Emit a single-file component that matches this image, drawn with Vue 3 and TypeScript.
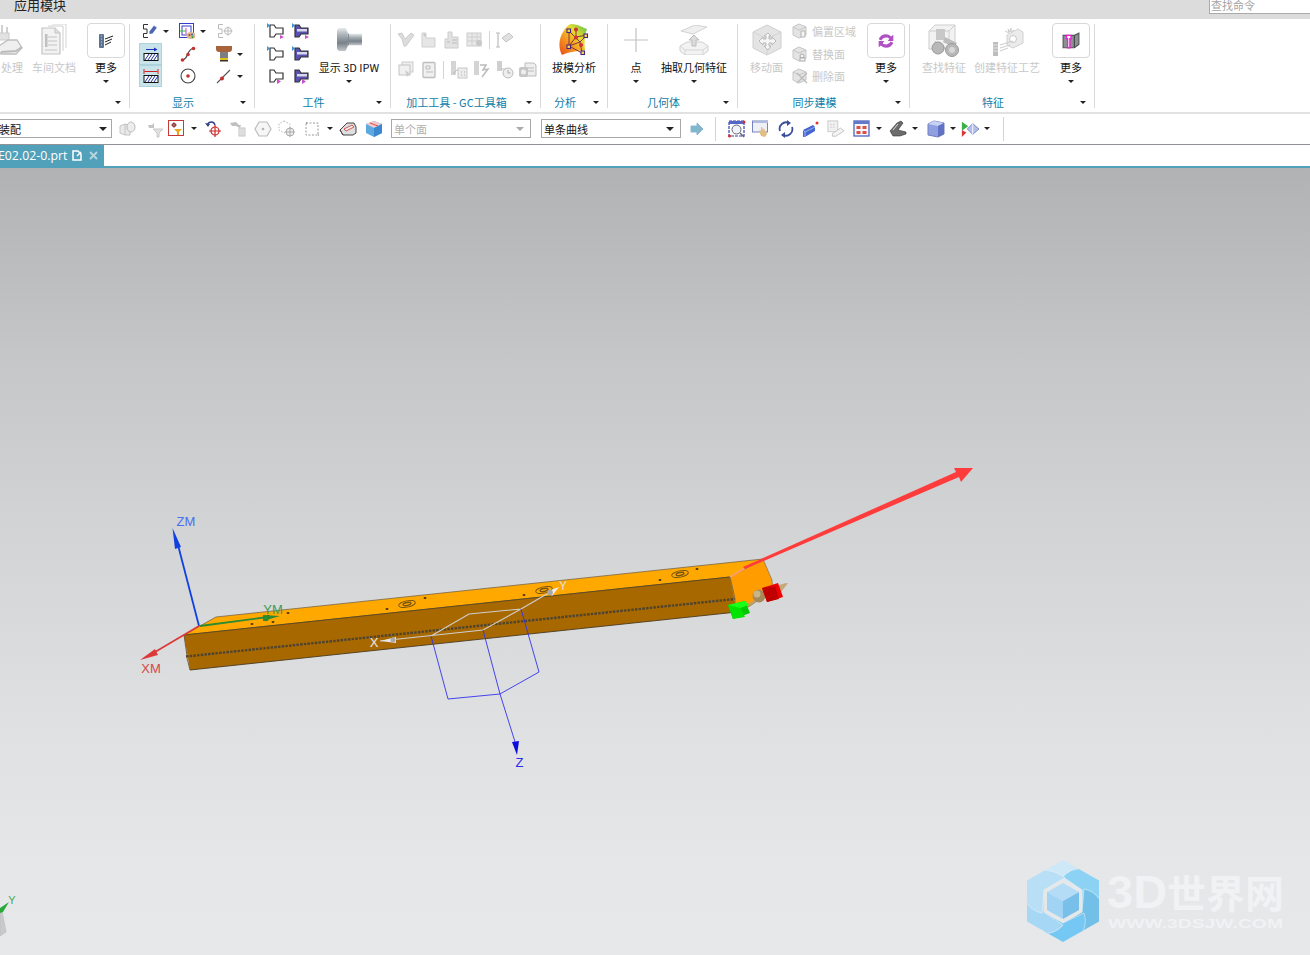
<template>
  <div class="app">
    <!-- shared icon symbols -->
    <svg class="defs" aria-hidden="true">
      <defs>
        <linearGradient id="steel" x1="0" y1="0" x2="0" y2="1">
          <stop offset="0" stop-color="#e6eaec" /><stop offset=".3" stop-color="#aab2b7" /><stop offset=".65" stop-color="#78818a" /><stop offset="1" stop-color="#c2c8cb" />
        </linearGradient>
        <linearGradient id="heat" x1="0" y1="1" x2="1" y2="0">
          <stop offset="0" stop-color="#e8481c" /><stop offset=".4" stop-color="#f4a020" /><stop offset=".65" stop-color="#e4dc30" /><stop offset="1" stop-color="#4cc050" />
        </linearGradient>
      </defs>
      <symbol id="s-flash" viewBox="0 0 16 16"><path d="M6 1.500H1.500V6H5V10.500H1.500V14.500H6" fill="none" stroke="#333" /><path d="M7.500 8.500 12 2.500l3 2-4.500 6-3 .5z" fill="#4a66b0" /><path d="M12 2.500l3 2" stroke="#c8d4ee" /></symbol>
      <symbol id="s-palette" viewBox="0 0 16 16"><rect x=".5" y=".5" width="14" height="14" fill="#fff" stroke="#3340c8" /><rect x="3" y="3" width="9" height="9" fill="none" stroke="#3340c8" /><path d="M1 8h6" stroke="#3cc040" /><path d="M7 5v6" stroke="#d040c0" /><ellipse cx="12" cy="12.500" rx="4.500" ry="3.500" fill="#d9b98c" /><circle cx="10.500" cy="12" r="1" fill="#d03030" /><circle cx="13" cy="11.500" r="1" fill="#3060c0" /><circle cx="13.500" cy="14" r="1" fill="#30a040" /></symbol>
      <symbol id="s-snap" viewBox="0 0 16 16"><path d="M6 1.500H1.500V6H5V10.500H1.500V14.500H6" fill="none" stroke="#bbb" /><circle cx="11" cy="8" r="3.500" fill="none" stroke="#bbb" /><path d="M6.500 8h9M11 3.500v9" stroke="#bbb" /></symbol>
      <symbol id="s-hatch1" viewBox="0 0 16 16"><path d="M3 3.500h10" stroke="#2030c0" /><path d="M14.500 3.500 11 1.500v4z" fill="#2030c0" /><rect x="1" y="7.500" width="14" height="7" fill="#fff" stroke="#111" /><path d="M2 14 6 8M5 14 9 8M8 14 12 8M11 14 15 8" stroke="#2030a0" /></symbol>
      <symbol id="s-hatch2" viewBox="0 0 16 16"><path d="M1.500 3.500h13" stroke="#d02020" /><path d="M1 1v5M15 1v5" stroke="#d02020" /><rect x="1" y="7.500" width="14" height="7" fill="#fff" stroke="#111" /><path d="M2 14 6 8M5 14 9 8M8 14 12 8M11 14 15 8" stroke="#2030a0" /></symbol>
      <symbol id="s-curve" viewBox="0 0 16 16"><path d="M2 14C9 14 6 3 14 2" fill="none" stroke="#444" stroke-width="1.200" /><circle cx="2.500" cy="14" r="1.800" fill="#c83030" /><circle cx="8" cy="8.500" r="1.800" fill="#c83030" /><circle cx="13.500" cy="2.500" r="1.800" fill="#c83030" /></symbol>
      <symbol id="s-tool" viewBox="0 0 16 16"><path d="M0 0h16v3q0 3-3 3H3Q0 6 0 3z" fill="#a8633c" /><rect x="4" y="6" width="8" height="6" fill="#7c7f82" /><rect x="4" y="12" width="8" height="2" fill="#e4c010" /><rect x="4" y="14" width="8" height="1.500" fill="#333" /></symbol>
      <symbol id="s-circle" viewBox="0 0 16 16"><circle cx="8" cy="8" r="7" fill="#fff" stroke="#444" stroke-width="1.100" /><circle cx="8" cy="8" r="1.800" fill="#c83030" /></symbol>
      <symbol id="s-line" viewBox="0 0 16 16"><path d="M1 15 14 2" stroke="#555" stroke-width="1.100" /><circle cx="6" cy="10.500" r="2" fill="#c83030" /></symbol>

      <symbol id="w-a" viewBox="0 0 18 16"><path d="M3 2H7L9 5H16V11H9L7 14H3z" fill="#fff" stroke="#333" stroke-width="1.200" /><path d="M0 0 3 2.500 0 5z" fill="#3b94d8" /><path d="M13 12l4 2-4 2z" fill="#c850c8" /></symbol>
      <symbol id="w-b" viewBox="0 0 18 16"><path d="M3 2H7L9 5H16V11H9L7 14H3z" fill="#5a52b0" stroke="#333" stroke-width="1.200" /><path d="M5 6h10v2.500H5z" fill="#d8d8ea" /><path d="M0 0 3 2.500 0 5z" fill="#3b94d8" /><path d="M13 12l4 2-4 2z" fill="#c850c8" /></symbol>
      <symbol id="w-c" viewBox="0 0 18 16"><path d="M3 2H7L9 5H16V11H9L7 14H3z" fill="#fff" stroke="#333" stroke-width="1.200" /><path d="M0 0 3 2.500 0 5z" fill="#3b94d8" /></symbol>
      <symbol id="w-d" viewBox="0 0 18 16"><path d="M3 2H7L9 5H16V11H9L7 14H3z" fill="#5a52b0" stroke="#333" stroke-width="1.200" /><path d="M5 6h10v2.500H5z" fill="#d8d8ea" /><path d="M0 0 3 2.500 0 5z" fill="#3b94d8" /></symbol>
      <symbol id="w-e" viewBox="0 0 18 16"><path d="M3 2H7L9 5H16V11H9L7 14H3z" fill="#fff" stroke="#333" stroke-width="1.200" /><path d="M10 11l4 2.500-4 2.500z" fill="#c850c8" /></symbol>
      <symbol id="w-f" viewBox="0 0 18 16"><path d="M3 2H7L9 5H16V11H9L7 14H3z" fill="#5a52b0" stroke="#333" stroke-width="1.200" /><path d="M5 6h10v2.500H5z" fill="#d8d8ea" /><path d="M10 11l4 2.500-4 2.500z" fill="#c850c8" /></symbol>

      <symbol id="g-1" viewBox="0 0 18 18"><path d="M1 3l4-1 3 6 6-6 3 2-8 11H7L5 8z" fill="#dcdcdc" stroke="#ccc" /></symbol>
      <symbol id="g-2" viewBox="0 0 18 18"><path d="M2 2h4v5h9v9H2z" fill="#e6e6e6" stroke="#cfcfcf" /><path d="M3 3l3 0-1 3z" fill="#c8c8c8" /></symbol>
      <symbol id="g-3" viewBox="0 0 18 18"><path d="M5 1h4v5h6v11H2V8h3z" fill="#e2e2e2" stroke="#ccc" /><path d="M9 9h5M9 12h5M4 11h3" stroke="#bbb" /></symbol>
      <symbol id="g-4" viewBox="0 0 18 18"><rect x="1" y="2" width="14" height="13" fill="#e8e8e8" stroke="#ccc" /><path d="M1 6h14M1 10h14M6 2v13M11 2v13" stroke="#d0d0d0" /><circle cx="13" cy="12" r="3" fill="#c8c8c8" /></symbol>
      <symbol id="g-5" viewBox="0 0 18 18"><path d="M2 2v14M0 2h4M0 16h4" stroke="#bbb" stroke-width="1.200" /><path d="M6 7l7-5 4 4-7 5z" fill="#e0e0e0" stroke="#c4c4c4" /></symbol>
      <symbol id="g-6" viewBox="0 0 18 18"><rect x="5" y="1" width="11" height="10" fill="#eee" stroke="#ccc" /><rect x="2" y="4" width="11" height="10" fill="#f0f0f0" stroke="#c4c4c4" /><path d="M8 9l2 7 1.500-2 2.500-.5z" fill="#ccc" /></symbol>
      <symbol id="g-7" viewBox="0 0 18 18"><rect x="3" y="1.500" width="12" height="15" rx="1" fill="#f0f0f0" stroke="#bdbdbd" stroke-width="1.300" /><path d="M6 5h4v3H6z" fill="none" stroke="#bbb" /><path d="M6 11h7" stroke="#bbb" /></symbol>
      <symbol id="g-8" viewBox="0 0 18 18"><rect x="1" y="0" width="5" height="14" fill="#d4d4d4" /><path d="M3 13l4-4h4" fill="none" stroke="#bbb" /><rect x="8" y="7" width="9" height="10" fill="#ececec" stroke="#c8c8c8" /><path d="M11 11h1M14 11h1M11 14h1M14 14h1" stroke="#aaa" /></symbol>
      <symbol id="g-9" viewBox="0 0 18 18"><rect x="1" y="0" width="5" height="14" fill="#d4d4d4" /><path d="M7 4h6l-3 5 5-1-6 8" fill="none" stroke="#bbb" stroke-width="1.500" /></symbol>
      <symbol id="g-10" viewBox="0 0 18 18"><rect x="1" y="0" width="5" height="10" fill="#cfcfcf" /><path d="M5 8h4" stroke="#bbb" /><circle cx="12" cy="12" r="5" fill="#eee" stroke="#bbb" /><path d="M12 9v3h2.500" stroke="#aaa" fill="none" /></symbol>
      <symbol id="g-11" viewBox="0 0 18 18"><path d="M6 2h9l2 2v11H6z" fill="#eee" stroke="#bbb" /><path d="M8 7h7M8 10h7" stroke="#bbb" /><rect x="0" y="6" width="9" height="10" rx="2" fill="#c6c6c6" /><circle cx="4.500" cy="11" r="2.500" fill="#eee" /></symbol>

      <symbol id="b-machine" viewBox="0 0 32 32"><path d="M4 1v11M9 1v11M14 3v10" stroke="#d0d0d0" stroke-width="2" /><rect x="3" y="9" width="13" height="7" fill="#e2e2e2" stroke="#ccc" /><path d="M3 24 15 16h9l5 8-6 6H8z" fill="#efefef" stroke="#bfbfbf" stroke-width="1.300" /><path d="M8 28l15-1 6-4" fill="none" stroke="#bbb" stroke-width="2" /></symbol>
      <symbol id="b-doc" viewBox="0 0 32 32"><path d="M14 0h14v24" fill="none" stroke="#d4d4d4" /><path d="M10 2h15v25" fill="none" stroke="#d0d0d0" /><path d="M4 4h13l5 5v21H4z" fill="#f2f2f2" stroke="#c4c4c4" stroke-width="1.200" /><path d="M17 4v5h5" fill="#e0e0e0" stroke="#c4c4c4" /><rect x="7" y="10" width="2.500" height="13" fill="#c0c0c0" /><path d="M10 13h9M10 17h9M10 21h9M7 26h12" stroke="#c4c4c4" /></symbol>
      <symbol id="b-more1" viewBox="0 0 20 20"><rect x="3" y="3" width="5" height="14" rx="1" fill="#5c7492" /><path d="M5 5h1M5 8h1M5 11h1M5 14h1" stroke="#cdd8e6" /><path d="M9 8l8-3M9 11l7-3M9 14l6-3" stroke="#222" fill="none" /></symbol>
      <symbol id="b-ipw" viewBox="0 0 28 26"><path d="M1 3l2-2h7l3 7v10l-3 7H3l-2-2z" fill="url(#steel)" /><rect x="12" y="7" width="15" height="12" fill="url(#steel)" /><path d="M13 7v12" stroke="#7f888f" /></symbol>
      <symbol id="b-draft" viewBox="0 0 32 32"><path d="M13 0C19 0 24 3 29 5 27 10 26 17 27 26 20 27 10 28 4 31 0 24 1 14 5 8 7 4 10 1 13 0z" fill="url(#heat)" /><g fill="none" stroke="#8a3040"><path d="M11 7 22 18M11 7V22L24 29M11 22 22 18 29 11 18 13 11 22M22 18 24 29M18 5 18 13" /></g><g fill="#d03038"><circle cx="18" cy="5.500" r="2" /><circle cx="18" cy="13.500" r="2" /><circle cx="23" cy="21" r="2" /></g><g fill="#f6e04a" stroke="#4a2480" stroke-width="1.100"><rect x="9" y="5" width="3.500" height="3.500" /><rect x="26" y="10" width="3.500" height="3.500" /><rect x="9" y="21" width="3.500" height="3.500" /><rect x="23" y="27" width="3.500" height="3.500" /></g></symbol>
      <symbol id="b-plus" viewBox="0 0 24 24"><path d="M12 0v24M0 12h24" stroke="#c2c2c2" stroke-width="1.200" /></symbol>
      <symbol id="b-extract" viewBox="0 0 30 30"><path d="M2 6 16 0l12 2-14 7z" fill="#efefef" stroke="#d2d2d2" /><path d="M1 21 8 17H23L29 21V26L24 30H6L1 26z" fill="#f2f2f2" stroke="#cfcfcf" /><path d="M1 21 6 25H24L29 21M6 25V30M24 25V30" fill="none" stroke="#d6d6d6" /><path d="M15 10l-5 5h3v6h4v-6h3z" fill="#dcdcdc" stroke="#bcbcbc" /></symbol>
      <symbol id="b-move" viewBox="0 0 32 32"><path d="M16 1 30 8v16L16 31 2 24V8z" fill="#e4e4e4" stroke="#cfcfcf" /><path d="M2 8l14 7 14-7M16 15v16" stroke="#d2d2d2" fill="none" /><path d="M17 9l3 3h-2v3h3v-2l4 4-4 4v-2h-3v3h2l-3 4-4-4h2v-3h-3v2l-4-4 4-4v2h3v-3h-2z" fill="#f6f6f6" stroke="#b8b8b8" /></symbol>
      <symbol id="s-cube1" viewBox="0 0 16 16"><path d="M7 1 14 4v8l-7 3-6-3V4z" fill="#e4e4e4" stroke="#c6c6c6" /><path d="M1 4l6 3 7-3" fill="none" stroke="#c6c6c6" /><path d="M9 8h4v6H9z" fill="#f4f4f4" stroke="#b4b4b4" /></symbol>
      <symbol id="s-cube2" viewBox="0 0 16 16"><path d="M7 1 14 4v8l-7 3-6-3V4z" fill="#e4e4e4" stroke="#c6c6c6" /><path d="M1 4l6 3 7-3" fill="none" stroke="#c6c6c6" /><circle cx="10" cy="10" r="2" fill="#f4f4f4" stroke="#aaa" /><rect x="8" y="12" width="5" height="3" fill="#f4f4f4" stroke="#aaa" /></symbol>
      <symbol id="s-cube3" viewBox="0 0 16 16"><path d="M7 1 14 4v8l-7 3-6-3V4z" fill="#e4e4e4" stroke="#c6c6c6" /><path d="M1 4l6 3 7-3" fill="none" stroke="#c6c6c6" /><path d="M5 5l10 10M15 5 5 15" stroke="#bbb" stroke-width="1.300" /></symbol>
      <symbol id="b-sync" viewBox="0 0 16 16"><path d="M1.500 6.500C3 2 9 .5 12.500 4L14.500 2.500V8H9.500l1.500-2C9 4 5 5 4 7.500z" fill="#b050c4" /><path d="M14.500 9.500C13 14 7 15.500 3.500 12L1.500 13.500V8H6.500L5 10c2 2 6 1 7-1.500z" fill="#b050c4" /></symbol>
      <symbol id="b-find" viewBox="0 0 34 34"><path d="M2 8 8 2h20v18l-6 6H2z" fill="#f2f2f2" stroke="#cdcdcd" /><path d="M2 8h20v18M22 8l6-6" fill="none" stroke="#cdcdcd" /><rect x="9" y="6" width="9" height="11" fill="#c8c8c8" /><path d="M8 18l10 6-2 5-10-5z" fill="#c4c4c4" /><path d="M18 14l12 6-4 4-10-5z" fill="#bcbcbc" /><circle cx="11" cy="25" r="6" fill="#b8b8b8" stroke="#999" /><circle cx="25" cy="27" r="6.500" fill="#b8b8b8" stroke="#999" /><circle cx="25" cy="27" r="3" fill="#d8d8d8" /></symbol>
      <symbol id="b-create" viewBox="0 0 34 34"><path d="M15 8l4 2-1-4 2 3 1-4v4l3-2" stroke="#ccc" fill="none" /><path d="M17 12l11-6 5 3v11l-10 5-6-3z" fill="#ebebeb" stroke="#d0d0d0" /><circle cx="23" cy="16" r="3.500" fill="#fff" stroke="#c8c8c8" /><rect x="3" y="19" width="5" height="14" fill="#bdbdbd" /><path d="M3 22h5M3 25h5M3 28h5" stroke="#e2e2e2" /><path d="M10 22l13-4M10 25l10-3M10 28l8-3" stroke="#ccc" /></symbol>
      <symbol id="b-pink" viewBox="0 0 16 16"><path d="M1 3h10l4-2v10l-4 3H1z" fill="#8c9094" stroke="#555" /><path d="M11 3v11" stroke="#444" /><path d="M4 3h4v3H7v8H5V6H4z" fill="#fff" stroke="#f020d8" stroke-width="1.200" /></symbol>

      <symbol id="t-a" viewBox="0 0 18 18"><path d="M1 6 6 4v11l-5-2zM6 4l5 2v9l-5 0" fill="#eaeaea" stroke="#c4c4c4" /><ellipse cx="12" cy="7" rx="4" ry="5" fill="#ececec" stroke="#bbb" /></symbol>
      <symbol id="t-b" viewBox="0 0 18 18"><path d="M2 5h4l2-2v5H3z" fill="#c4c4c4" /><path d="M7 9h10l-4 4v4h-2v-4z" fill="#e2e2e2" stroke="#c8c8c8" /></symbol>
      <symbol id="t-filter" viewBox="0 0 18 18"><rect x=".5" y=".5" width="15" height="15" fill="#fff" stroke="#c83838" /><path d="M6 2.500v5M3.500 5h5" stroke="#8a3030" /><circle cx="6" cy="5" r="1.800" fill="none" stroke="#8a3030" /><path d="M6 9h8l-3 3v3H9v-3z" fill="#e8a820" /></symbol>
      <symbol id="t-undo" viewBox="0 0 18 18"><path d="M2 5C4 1 9 1 10 5" fill="none" stroke="#334488" stroke-width="1.300" /><path d="M0 3l3 4 2-3z" fill="#334488" /><circle cx="10" cy="11" r="4" fill="none" stroke="#d02828" stroke-width="1.200" /><path d="M10 5v12M4 11h12" stroke="#d02828" stroke-width="1.200" /></symbol>
      <symbol id="t-c" viewBox="0 0 18 18"><path d="M1 3l6-1 3 3 2 0-1 3L7 6 3 6z" fill="#c0c0c0" /><rect x="10" y="8" width="6" height="8" fill="#eee" stroke="#c4c4c4" /><path d="M12 8v8M14 8v8" stroke="#ccc" /></symbol>
      <symbol id="t-hex" viewBox="0 0 18 18"><path d="M5 2h8l4 7-4 7H5L1 9z" fill="#f6f6f6" stroke="#bcbcbc" stroke-width="1.200" /><circle cx="9" cy="9" r="1.300" fill="#b4b4b4" /></symbol>
      <symbol id="t-d" viewBox="0 0 18 18"><path d="M6 1l6 3v6l-6 3-5-3V4z" fill="none" stroke="#b8b8b8" stroke-dasharray="1.500 1.500" /><circle cx="12" cy="12" r="4" fill="#eee" stroke="#aaa" /><path d="M12 7v10M7 12h10" stroke="#aaa" /></symbol>
      <symbol id="t-e" viewBox="0 0 18 18"><rect x="2" y="3" width="12" height="12" fill="none" stroke="#999" stroke-dasharray="2 1.500" /><path d="M2 3h1M14 15h1" stroke="#777" /></symbol>
      <symbol id="t-f" viewBox="0 0 18 18"><path d="M1 10 8 3h7l2 4v6l-3 2H4z" fill="#dedede" stroke="#444" /><path d="M5 9l8-4 2 2-8 4z" fill="#f0f0f0" stroke="#d03030" stroke-width=".8" /><path d="M1 10l3 5" stroke="#444" /></symbol>
      <symbol id="t-g" viewBox="0 0 18 18"><path d="M9 1l8 3v9l-8 4-8-4V4z" fill="#5ca8e0" /><path d="M1 4l8 4 8-4-8-3z" fill="#f0c8c8" /><path d="M9 8v9l8-4V4z" fill="#3c88d0" /><path d="M5 3l8 3" stroke="#e05050" /></symbol>
      <symbol id="t-next" viewBox="0 0 14 14"><path d="M1 4h6V1l6 6-6 6v-3H1z" fill="#7fb8cc" stroke="#8fb4d0" /></symbol>
      <symbol id="t-h" viewBox="0 0 18 18"><rect x="1" y="1" width="15" height="15" fill="#fff" stroke="#3344b0" stroke-width="1.200" stroke-dasharray="3 1" /><rect x="1" y="1" width="15" height="3" fill="#5566c8" /><circle cx="8.500" cy="9.500" r="4.500" fill="#f0f4f8" stroke="#667" /><path d="M12 13l4 4" stroke="#667" stroke-width="1.500" /><circle cx="1.500" cy="16" r="1.500" fill="#d03030" /><circle cx="16" cy="2" r="1.500" fill="#d03030" /></symbol>
      <symbol id="t-i" viewBox="0 0 18 18"><rect x=".5" y="1" width="15" height="11" fill="#eef0f6" stroke="#7484c0" /><rect x="1" y="1" width="15" height="2" fill="#b0bcdc" /><path d="M9 16l-2-5 1-1 1 1V7h1l1 3 1-2 1 3 1 0 1 3-2 3z" fill="#e2bd84" /></symbol>
      <symbol id="t-j" viewBox="0 0 18 18"><path d="M3 11A6.500 6.500 0 0 1 12 3" fill="none" stroke="#3a4f98" stroke-width="1.800" /><path d="M15 7a6.500 6.500 0 0 1-9 8" fill="none" stroke="#3a4f98" stroke-width="1.800" /><path d="M10 0l4 3-4 3zM8 12l-4 3 4 3z" fill="#3a4f98" /></symbol>
      <symbol id="t-k" viewBox="0 0 18 18"><path d="M1 10l10-5 2 2v4L3 17H1z" fill="#4466d0" /><path d="M1 10l2 2v5M3 12l10-5" stroke="#9db4f0" fill="none" /><circle cx="15" cy="3" r="1.500" fill="#e03838" /></symbol>
      <symbol id="t-l" viewBox="0 0 20 20"><rect x="1" y="1" width="11" height="12" fill="#f0f0f0" stroke="#c8c8c8" /><path d="M4 5h1M7 5h1M4 8h1M7 8h1" stroke="#aaa" /><path d="M6 15l9-6 4 3-9 6H6z" fill="#f4f4f4" stroke="#c0c0c0" /></symbol>
      <symbol id="t-m" viewBox="0 0 18 18"><rect x="1" y="1" width="15" height="15" fill="#f6f6fc" stroke="#4f64c0" stroke-width="1.300" /><rect x="1" y="1" width="15" height="3" fill="#6478c8" /><rect x="3.500" y="6" width="4" height="3" fill="#e05040" /><rect x="9.500" y="6" width="4" height="3" fill="#e05040" /><rect x="3.500" y="11" width="4" height="3" fill="#e05040" /><rect x="9.500" y="11" width="4" height="3" fill="#e05040" /></symbol>
      <symbol id="t-n" viewBox="0 0 18 18"><path d="M1 11 8 3l4-2 2 2-5 7 8 2v2l-6 2H4z" fill="#6c6c6c" stroke="#333" stroke-width=".6" /><path d="M4 10l5-6" stroke="#ddd" /></symbol>
      <symbol id="t-o" viewBox="0 0 18 18"><path d="M1 4l6-3 10 2v11l-6 3-10-2z" fill="#8f9fe0" stroke="#7080c0" /><path d="M1 4l10 2 6-3-10-2z" fill="#c8d2f4" /><path d="M11 6v11l6-3V3z" fill="#5f72c4" /></symbol>
      <symbol id="t-p" viewBox="0 0 20 18"><path d="M1 1l7 5-7 5z" fill="#3cb048" /><path d="M1 10l5 3-5 5z" fill="#d83838" /><path d="M7 9l6-6 7 6-7 6z" fill="#b4bfe8" stroke="#7485c8" /><path d="M13 3v12" stroke="#fff" /></symbol>
    </svg>

    <div class="titlebar">
      <span class="title">应用模块</span>
      <div class="search">查找命令</div>
    </div>

    <div class="ribbon">
      <section class="group g0">
        <div class="body">
          <div class="big w24 off">
            <div class="big-ico"><svg class="i32 shift"><use href="#b-machine" /></svg></div>
            <span>处理</span>
          </div>
          <div class="big w44 off gap8">
            <div class="big-ico"><svg class="i32"><use href="#b-doc" /></svg></div>
            <span>车间文档</span>
          </div>
          <div class="big w38 gap11">
            <div class="more-box"><svg class="i20"><use href="#b-more1" /></svg></div>
            <span>更多</span>
            <i class="arrow down" />
          </div>
        </div>
        <div class="foot"><span></span><i class="arrow" /></div>
      </section>

      <section class="group g1">
        <div class="body">
          <div class="small-grid three">
            <div v-for="c in displayCells" :key="c.id" class="cell">
              <span :class="['slot', { on: c.on }]"><svg class="i16"><use :href="`#${c.id}`" /></svg></span>
              <i v-if="c.drop" class="arrow" />
            </div>
          </div>
        </div>
        <div class="foot"><span>显示</span><i class="arrow" /></div>
      </section>

      <section class="group g2">
        <div class="body">
          <div class="small-grid two">
            <span v-for="w in workIcons" :key="w" class="slot wide"><svg class="i18"><use :href="`#${w}`" /></svg></span>
          </div>
          <div class="big w64 gap4">
            <div class="big-ico"><svg class="ipw"><use href="#b-ipw" /></svg></div>
            <span>显示 3D IPW</span>
            <i class="arrow down" />
          </div>
        </div>
        <div class="foot"><span>工件</span><i class="arrow" /></div>
      </section>

      <section class="group g3">
        <div class="rows">
          <div v-for="(row, r) in toolRows" :key="r" class="tool-row">
            <template v-for="t in row" :key="t">
              <i v-if="t === '|'" class="vsep" />
              <span v-else class="tool"><svg class="i18"><use :href="`#${t}`" /></svg></span>
            </template>
          </div>
        </div>
        <div class="foot"><span>加工工具 - GC工具箱</span><i class="arrow" /></div>
      </section>

      <section class="group g4">
        <div class="body">
          <div class="big w66">
            <div class="big-ico"><svg class="i32"><use href="#b-draft" /></svg></div>
            <span>拔模分析</span>
            <i class="arrow down" />
          </div>
        </div>
        <div class="foot"><span>分析</span><i class="arrow" /></div>
      </section>

      <section class="group g5">
        <div class="body">
          <div class="big w30">
            <div class="big-ico"><svg class="i24"><use href="#b-plus" /></svg></div>
            <span>点</span>
            <i class="arrow down" />
          </div>
          <div class="big w66 gap10">
            <div class="big-ico"><svg class="i30"><use href="#b-extract" /></svg></div>
            <span>抽取几何特征</span>
            <i class="arrow down" />
          </div>
        </div>
        <div class="foot"><span>几何体</span><i class="arrow" /></div>
      </section>

      <section class="group g6">
        <div class="body">
          <div class="big w33 off">
            <div class="big-ico"><svg class="i32"><use href="#b-move" /></svg></div>
            <span>移动面</span>
          </div>
          <div class="sync-list gap9">
            <div v-for="s in syncRows" :key="s.id" class="sync-row">
              <svg class="i16"><use :href="`#${s.id}`" /></svg>
              <span>{{ s.label }}</span>
            </div>
          </div>
          <div class="big w38 gap11">
            <div class="more-box"><svg class="i16"><use href="#b-sync" /></svg></div>
            <span>更多</span>
            <i class="arrow down" />
          </div>
        </div>
        <div class="foot"><span>同步建模</span><i class="arrow" /></div>
      </section>

      <section class="group g7">
        <div class="body">
          <div class="big w44 off">
            <div class="big-ico"><svg class="i34"><use href="#b-find" /></svg></div>
            <span>查找特征</span>
          </div>
          <div class="big w66 off gap8">
            <div class="big-ico"><svg class="i34"><use href="#b-create" /></svg></div>
            <span>创建特征工艺</span>
          </div>
          <div class="big w38 gap12">
            <div class="more-box"><svg class="i16"><use href="#b-pink" /></svg></div>
            <span>更多</span>
            <i class="arrow down" />
          </div>
        </div>
        <div class="foot"><span>特征</span><i class="arrow" /></div>
      </section>
    </div>

    <div class="toolbar">
      <div class="select first"><span>装配</span><i class="arrow big-arrow" /></div>
      <template v-for="t in toolbarLeft" :key="t.id">
        <span class="tb" :style="{ marginLeft: t.gap + 'px' }"><svg class="i18"><use :href="`#${t.id}`" /></svg></span>
        <i v-if="t.drop" class="arrow tb-drop" />
      </template>
      <div class="select dim"><span>单个面</span><i class="arrow big-arrow" /></div>
      <div class="select"><span>单条曲线</span><i class="arrow big-arrow" /></div>
      <svg class="next"><use href="#t-next" /></svg>
      <i class="tsep first-sep" />
      <template v-for="t in toolbarRight" :key="t.id">
        <span class="tb" :style="{ marginLeft: t.gap + 'px' }"><svg class="i18"><use :href="`#${t.id}`" /></svg></span>
        <i v-if="t.drop" class="arrow tb-drop" />
      </template>
      <i class="tsep last-sep" />
    </div>

    <div class="tabstrip">
      <div class="tab">
        <span class="tab-name">E02.02-0.prt</span>
        <svg class="tab-doc" viewBox="0 0 10 11"><path d="M1 1h5l3 3v6H1z" fill="none" stroke="#fff" stroke-width="1.500" /><path d="M5 6l4-4" stroke="#fff" stroke-width="1.500" /></svg>
        <svg class="tab-x" viewBox="0 0 9 9"><path d="M1 1l7 7M8 1 1 8" stroke="#b9d6e0" stroke-width="1.800" /></svg>
      </div>
    </div>

    <main class="viewport">
      <svg class="scene" viewBox="0 168 1310 787" width="1310" height="787">
        <defs>
          <clipPath id="hexclip"><path d="M0 -41 36 -20.500V20.500L0 41-36 20.500V-20.500z" /></clipPath>
        </defs>

        <!-- part -->
        <path d="M184 635 216 617 763 559 730 577z" fill="#ffa900" stroke="#77664a" stroke-width=".8" />
        <path d="M730 577 763 559 772 580 773 590 750 606 737 612 735 599z" fill="#ff9c00" stroke="#77664a" stroke-width=".6" />
        <path d="M184 635 730 577 737 612 190 670z" fill="#a86800" />
        <path d="M190 670 737 612" stroke="#4a3a20" stroke-width=".9" />
        <path d="M184 635 730 577" stroke="#5f4a20" stroke-width="1" fill="none" />
        <path d="M186 656.500 735 599" stroke="#4e4430" stroke-width="2.400" stroke-dasharray="2.500 1.200" fill="none" />
        <path d="M730 577 735 599" stroke="#8a6a30" stroke-width=".8" />
        <path d="M184 635 187 656M187 658 190 670" stroke="#5f4a20" stroke-width=".8" />

        <g fill="none" stroke="#7a5510" stroke-width="1">
          <g v-for="h in holes" :key="h.x" :transform="`rotate(-12 ${h.x} ${h.y})`">
            <ellipse :cx="h.x" :cy="h.y" rx="8.500" ry="3.200" />
            <ellipse :cx="h.x" :cy="h.y" rx="4" ry="1.500" stroke-width="1.400" />
          </g>
        </g>
        <g fill="#4a3410">
          <ellipse v-for="d in dots" :key="d[0]" :cx="d[0]" :cy="d[1]" rx="1.500" ry=".9" />
        </g>

        <!-- datum csys -->
        <path d="M380 641 483 630 521 609 469 614 431 636M521 609 552 591" fill="none" stroke="#cfcfcf" stroke-width="1.100" />
        <path d="M431 636 448 699 500 694 539 672 521 609M483 630 500 694 516 745" fill="none" stroke="#3232f0" stroke-width=".9" />
        <path d="M512 742 519 741 517 755z" fill="#0c0cdc" />
        <path d="M380 641 396 637 396 643z" fill="#e4e4e4" /><circle cx="393" cy="640" r="2.500" fill="#aaa" />
        <path d="M559 587 548 591 552 596z" fill="#eee" /><circle cx="550" cy="592.500" r="2.800" fill="#a8a8a8" />
        <text x="374" y="647" class="axis" fill="#e8e8e8" text-anchor="middle">X</text>
        <text x="563" y="590" class="axis small" fill="#dedede" text-anchor="middle">Y</text>
        <text x="519.500" y="767" class="axis" fill="#2a2af0" text-anchor="middle">Z</text>

        <!-- wcs -->
        <path d="M199 626 178 545" stroke="#1040e0" stroke-width="1.800" />
        <path d="M172.500 528 181 547 175 549z" fill="#1040e0" />
        <path d="M199 626 155 652" stroke="#dc3a3a" stroke-width="1.800" />
        <path d="M140 660 155 649 158 655z" fill="#dc3a3a" />
        <path d="M200 626 264 617.500" stroke="#2c8a30" stroke-width="1.800" />
        <path d="M280 616 263 615 263 621z" fill="#2c8a30" /><circle cx="266" cy="618.500" r="2.800" fill="#2c8a30" />
        <text x="186" y="526" class="axis" fill="#4a70f0" text-anchor="middle">ZM</text>
        <text x="151" y="673" class="axis" fill="#d84848" text-anchor="middle">XM</text>
        <text x="273" y="614" class="axis" fill="#3d9c58" text-anchor="middle">YM</text>

        <!-- red vector -->
        <path d="M730 577 745 568" stroke="#f8a070" stroke-width="2" />
        <path d="M743 567 956 472 954 468 973 468 961 482 959 477 745 569z" fill="#ff3c3c" />

        <!-- handles -->
        <path d="M748 605 786 584" stroke="#c0a070" stroke-width="2" />
        <path d="M788 583 774 586 778 596z" fill="#c4a878" />
        <circle cx="759" cy="596" r="6.500" fill="#a48a58" /><circle cx="757" cy="594" r="3.500" fill="#c8b488" />
        <path d="M762 588 778 583 783 597 767 602z" fill="#f00000" />
        <path d="M762 588 775 586 779 599 767 602z" fill="#c00000" />
        <path d="M728 605 745 601 750 613 733 619z" fill="#00c800" />
        <path d="M728 605 740 607 745 617 733 619z" fill="#00e400" />
        <path d="M728 605 745 601 749 605 740 608z" fill="#18ff18" />

        <!-- view triad -->
        <path d="M0 912 2 911 6 932 0 936z" fill="#c9cacc" stroke="#b8b9bb" stroke-width=".6" />
        <path d="M0 908 9 902 3 912 0 913z" fill="#2aa83a" />
        <text x="12" y="904" class="axis tiny" fill="#4aa860" text-anchor="middle">Y</text>

        <!-- watermark -->
        <g transform="translate(1063 901)">
          <g clip-path="url(#hexclip)">
            <path v-for="(b, k) in blades" :key="b" d="M-21-12Q-24-22-20-30L-12-50 26-50 17-33Q23-20 21-10L0-22z" :fill="b" stroke="#e6eef4" stroke-width=".6" :transform="`rotate(${k * 60})`" />
          </g>
          <path d="M0-22 19-11V11L0 22-19 11V-11z" fill="#e6e7e9" />
          <path d="M0-18 16-9 0 0-16-9z" fill="#b4dcf7" />
          <path d="M-16-9 0 0V18L-16 9z" fill="#a0d3f4" />
          <path d="M16-9 0 0V18L16 9z" fill="#78c0ea" />
        </g>
        <text x="1107" y="908" class="wm-main"><tspan class="wm-en">3D</tspan>世界网</text>
        <text x="1108" y="928" class="wm-url" textLength="175" lengthAdjust="spacingAndGlyphs">WWW.3DSJW.COM</text>
      </svg>
    </main>
  </div>
</template>

<script setup lang="ts">
interface Cell {
  id: string
  on?: boolean
  drop?: boolean
}

interface TbItem {
  id: string
  gap: number
  drop?: boolean
}

const displayCells: Cell[] = [
  { id: 's-flash', drop: true },
  { id: 's-palette', drop: true },
  { id: 's-snap' },
  { id: 's-hatch1', on: true },
  { id: 's-curve' },
  { id: 's-tool', drop: true },
  { id: 's-hatch2', on: true },
  { id: 's-circle' },
  { id: 's-line', drop: true }
]

const workIcons = ['w-a', 'w-b', 'w-c', 'w-d', 'w-e', 'w-f']

const toolRows = [
  ['g-1', 'g-2', 'g-3', 'g-4', '|', 'g-5'],
  ['g-6', 'g-7', '|', 'g-8', 'g-9', 'g-10', 'g-11']
]

const syncRows = [
  { id: 's-cube1', label: '偏置区域' },
  { id: 's-cube2', label: '替换面' },
  { id: 's-cube3', label: '删除面' }
]

const toolbarLeft: TbItem[] = [
  { id: 't-a', gap: 4 },
  { id: 't-b', gap: 3 },
  { id: 't-filter', gap: -2, drop: true },
  { id: 't-undo', gap: 2 },
  { id: 't-c', gap: 0 },
  { id: 't-hex', gap: 1 },
  { id: 't-d', gap: 0 },
  { id: 't-e', gap: 2, drop: true },
  { id: 't-f', gap: 0 },
  { id: 't-g', gap: 2 }
]

const toolbarRight: TbItem[] = [
  { id: 't-h', gap: 9 },
  { id: 't-i', gap: 0 },
  { id: 't-j', gap: 1 },
  { id: 't-k', gap: 1 },
  { id: 't-l', gap: 1 },
  { id: 't-m', gap: 2, drop: true },
  { id: 't-n', gap: 1, drop: true },
  { id: 't-o', gap: 3, drop: true },
  { id: 't-p', gap: -1, drop: true }
]

const holes = [
  { x: 407, y: 604 },
  { x: 544, y: 590 },
  { x: 680, y: 574 }
]

// [x, y] of the small drilled holes on the top face
const dots: number[][] = [
  [252, 624], [268, 616], [273, 622], [288, 613], [387, 609],
  [425, 598], [524, 595], [660, 580], [697, 569]
]

const blades = ['#cfe8f7', '#8bd2f4', '#72bfe8', '#74c8f3', '#a6d8f5', '#b8dff6']
</script>

<style scoped>
.app {
  width: 1310px;
  height: 955px;
  display: flex;
  flex-direction: column;
  overflow: hidden;
  background: #fff;
  font-family: "Noto Sans CJK SC", "Liberation Sans", sans-serif;
  font-size: 11px;
  color: #111;
}

.defs {
  display: block;
  width: 0;
  height: 0;
}

svg {
  display: block;
  overflow: visible;
}

.titlebar {
  height: 19px;
  flex: none;
  display: flex;
  justify-content: space-between;
  background: #dcdcdc;
}

.title {
  margin: -5px 0 0 14px;
  font-size: 13px;
  line-height: 19px;
  color: #222;
}

.search {
  width: 101px;
  height: 14px;
  box-sizing: border-box;
  padding-left: 1px;
  background: #fff;
  border-left: 1px solid #aaa;
  border-bottom: 1px solid #aaa;
  font-size: 11px;
  line-height: 10px;
  color: #a4a4a4;
}

.ribbon {
  height: 93px;
  flex: none;
  display: flex;
  border-bottom: 2px solid #e2e2e2;
  box-sizing: content-box;
}

.group {
  flex: none;
  display: grid;
  grid-template-rows: 74px 19px;
  background: linear-gradient(#d9d9d9, #d9d9d9) right 5px / 1px 84px no-repeat;
}

.g0 { width: 130px; }
.g1 { width: 125px; }
.g2 { width: 136px; }
.g3 { width: 150px; }
.g4 { width: 67px; }
.g5 { width: 130px; }
.g6 { width: 172px; }
.g7 { width: 185px; }

.body {
  display: flex;
}

.g1 .body { padding-left: 2px; }
.g2 .body { padding-left: 8px; }
.g5 .body { padding-left: 13px; }
.g6 .body { padding-left: 12px; }
.g7 .body { padding-left: 12px; }

.foot {
  display: flex;
  align-items: center;
  color: #0f7da8;
  font-size: 11px;
}

.foot span {
  flex: 1;
  text-align: center;
  line-height: 19px;
  padding-right: 1px;
}

.arrow {
  display: block;
  flex: none;
  width: 0;
  height: 0;
  border-left: 3px solid transparent;
  border-right: 3px solid transparent;
  border-top: 3px solid #222;
}

.foot .arrow {
  margin: 0 9px 0 3px;
}

.big {
  flex: none;
  display: flex;
  flex-direction: column;
  align-items: center;
  white-space: nowrap;
}

.big > span {
  line-height: 16px;
  height: 16px;
  margin-top: -1px;
}

.big .down {
  margin-top: 5px;
}

.big-ico {
  height: 41px;
  display: flex;
  align-items: center;
  justify-content: center;
}

.off > span,
.sync-row span {
  color: #c8c8c8;
}

.w24 { width: 24px; }
.w30 { width: 30px; }
.w33 { width: 33px; }
.w38 { width: 38px; }
.w44 { width: 44px; }
.w64 { width: 64px; }
.w66 { width: 66px; }
.gap4 { margin-left: 4px; }
.gap8 { margin-left: 8px; }
.gap9 { margin-left: 9px; }
.gap10 { margin-left: 10px; }
.gap11 { margin-left: 11px; }
.gap12 { margin-left: 12px; }

.more-box {
  width: 38px;
  height: 35px;
  box-sizing: border-box;
  margin: 4px 0 2px;
  display: flex;
  align-items: center;
  justify-content: center;
  border: 1px solid #d8d8d8;
  border-radius: 4px;
}

.i16 { width: 16px; height: 16px; }
.i18 { width: 18px; height: 18px; }
.i20 { width: 20px; height: 20px; }
.i24 { width: 24px; height: 24px; }
.i30 { width: 30px; height: 30px; }
.i32 { width: 32px; height: 32px; }
.i34 { width: 34px; height: 34px; }
.ipw { width: 27px; height: 25px; }
.shift { margin-left: -6px; }
.more-box .i16 { width: 18px; height: 18px; }

.small-grid {
  display: grid;
  grid-template-rows: 24px 22px 22px;
}

.small-grid.three {
  grid-template-columns: repeat(3, 37px);
}

.small-grid.two {
  grid-template-columns: repeat(2, 25px);
  grid-template-rows: 24px 21px 23px;
}

.cell {
  display: flex;
  align-items: center;
  gap: 3px;
  padding-left: 7px;
}

.slot {
  width: 23px;
  height: 22px;
  box-sizing: border-box;
  display: flex;
  align-items: center;
  justify-content: center;
}

.slot.wide {
  width: 25px;
  height: auto;
}

.slot.on {
  background: #c9e3ea;
  border: 1px solid #aed3dc;
}

.rows {
  padding: 10px 0 0 3px;
}

.tool-row {
  display: flex;
  align-items: center;
  height: 22px;
  margin-bottom: 8px;
}

.tool {
  width: 23px;
  display: flex;
  justify-content: center;
}

.vsep {
  width: 1px;
  height: 18px;
  margin: 0 3px;
  background: #d4d4d4;
}

.sync-list {
  width: 64px;
  display: grid;
  grid-template-rows: 24px 22px 22px;
}

.sync-row {
  display: flex;
  align-items: center;
  gap: 4px;
  white-space: nowrap;
}

.toolbar {
  height: 31px;
  flex: none;
  display: flex;
  align-items: center;
  border-bottom: 1px solid #8f9398;
  box-sizing: content-box;
  margin-top: -1px;
}

.select {
  width: 140px;
  height: 19px;
  box-sizing: border-box;
  flex: none;
  display: flex;
  align-items: center;
  justify-content: space-between;
  padding: 0 6px 0 2px;
  margin-right: 10px;
  border: 1px solid #a8a8a8;
  font-size: 11px;
}

.select.first {
  width: 113px;
  margin: 0 0 0 -1px;
  padding-left: 0;
  padding-right: 4px;
  border-left: none;
}

.select.dim {
  color: #b0b0b0;
  margin-left: 5px;
}

.select.dim .arrow {
  border-top-color: #aaa;
}

.big-arrow {
  border-left-width: 4px;
  border-right-width: 4px;
  border-top-width: 4px;
}

.tb {
  flex: none;
  width: 24px;
  display: flex;
  justify-content: center;
}

.tb-drop {
  margin: 0 3px 0 2px;
}

.next {
  width: 14px;
  height: 14px;
  margin-left: -1px;
}

.tsep {
  flex: none;
  width: 1px;
  height: 24px;
  background: #d4d4d4;
}

.first-sep { margin-left: 11px; }
.last-sep { margin-left: 10px; }

.tabstrip {
  height: 21px;
  flex: none;
  border-bottom: 2px solid #52a1ba;
  box-sizing: content-box;
}

.tab {
  width: 104px;
  height: 21px;
  display: flex;
  align-items: center;
  background: #52a1ba;
  color: #fff;
}

.tab-name {
  margin-left: -2px;
  font-family: "Open Sans", "Liberation Sans", sans-serif;
  font-size: 12.300px;
  white-space: nowrap;
}

.tab-doc {
  width: 10px;
  height: 11px;
  margin-left: 5px;
}

.tab-x {
  width: 9px;
  height: 9px;
  margin-left: 7px;
}

.viewport {
  flex: 1;
  min-height: 0;
  background: linear-gradient(#b1b2b4 0, #c6c7c9 25%, #d2d3d5 45%, #dfe0e2 70%, #e6e7e9 90%, #e7e8ea 100%);
}

.axis {
  font-family: "Liberation Sans", sans-serif;
  font-size: 13px;
}

.axis.small {
  font-size: 12px;
}

.axis.tiny {
  font-size: 11px;
}

.wm-main {
  font-family: "Noto Sans CJK SC", sans-serif;
  font-size: 39px;
  font-weight: 700;
  fill: #f1f2f4;
}

.wm-en {
  font-family: "Liberation Sans", sans-serif;
  font-size: 47px;
}

.wm-url {
  font-family: "Liberation Sans", sans-serif;
  font-size: 12px;
  font-weight: 700;
  fill: #f1f2f4;
}
</style>
